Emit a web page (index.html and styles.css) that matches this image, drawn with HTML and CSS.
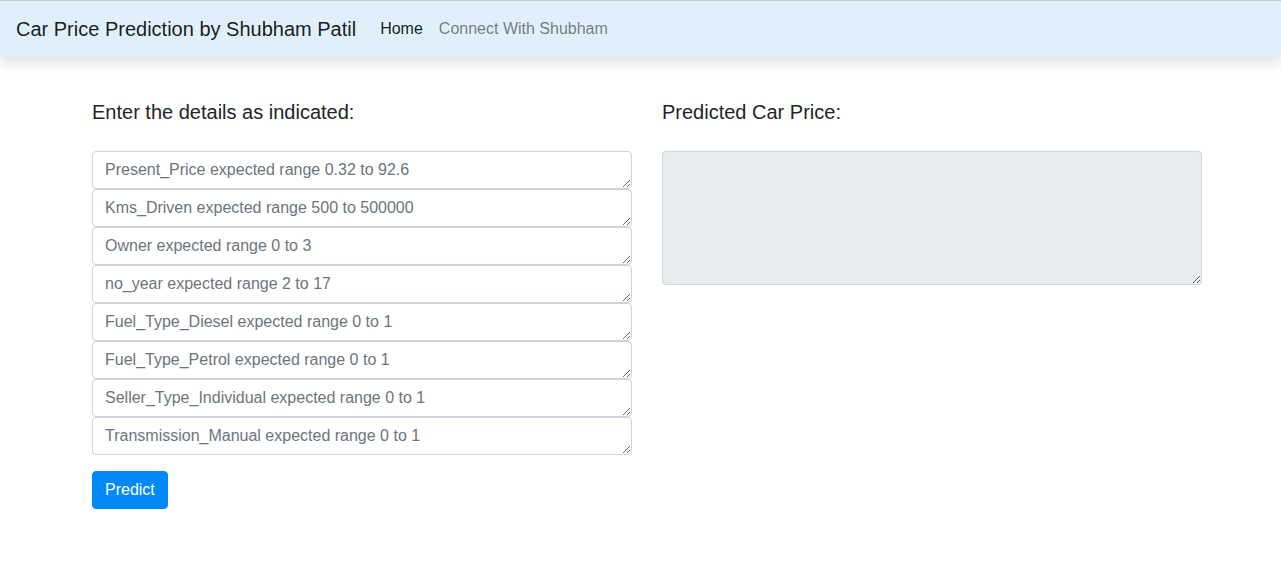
FILE: index.html
```html
<!DOCTYPE html>
<html lang="en">
<head>
<meta charset="utf-8">
<title>Car Price Prediction</title>
<link rel="stylesheet" href="styles.css">
</head>
<body>
<nav class="navbar">
  <span class="brand">Car Price Prediction by Shubham Patil</span>
  <a class="nav-link active" href="#">Home</a>
  <a class="nav-link" href="#">Connect With Shubham</a>
</nav>
<main class="content">
  <section class="col">
    <h5 class="title">Enter the details as indicated:</h5>
    <form class="form">
      <textarea class="field" rows="1" placeholder="Present_Price expected range 0.32 to 92.6"></textarea>
      <textarea class="field" rows="1" placeholder="Kms_Driven expected range 500 to 500000"></textarea>
      <textarea class="field" rows="1" placeholder="Owner expected range 0 to 3"></textarea>
      <textarea class="field" rows="1" placeholder="no_year expected range 2 to 17"></textarea>
      <textarea class="field" rows="1" placeholder="Fuel_Type_Diesel expected range 0 to 1"></textarea>
      <textarea class="field" rows="1" placeholder="Fuel_Type_Petrol expected range 0 to 1"></textarea>
      <textarea class="field" rows="1" placeholder="Seller_Type_Individual expected range 0 to 1"></textarea>
      <textarea class="field" rows="1" placeholder="Transmission_Manual expected range 0 to 1"></textarea>
      <button type="button" class="btn">Predict</button>
    </form>
  </section>
  <section class="col">
    <h5 class="title">Predicted Car Price:</h5>
    <textarea class="field result" readonly></textarea>
  </section>
</main>
</body>
</html>
```
FILE: styles.css
```css
* { box-sizing: border-box; }
body {
  margin: 0;
  font-family: "Liberation Sans", Arial, sans-serif;
  font-size: 16px;
  line-height: 1.5;
  color: #212529;
  background: #fff;
}
.navbar {
  height: 57px;
  border-top: 1px solid #c3cbcf;
  background: #dff0fa;
  display: flex;
  align-items: center;
  padding: 0 16px;
  box-shadow: 0 6px 12px rgba(0, 0, 0, 0.12);
}
.brand {
  font-size: 20px;
  color: rgba(0, 0, 0, 0.9);
  margin-right: 16px;
  line-height: 30px;
}
.nav-link {
  text-decoration: none;
  color: rgba(0, 0, 0, 0.5);
  padding: 0 8px;
  font-size: 16px;
}
.nav-link.active { color: rgba(0, 0, 0, 0.9); }
.content {
  display: flex;
  gap: 30px;
  padding: 43px 0 0 92px;
}
.col {
  width: 540px;
  display: flex;
  flex-direction: column;
}
.title {
  margin: 0 0 27px;
  font-size: 20px;
  font-weight: 500;
  line-height: 24px;
}
.form { display: flex; flex-direction: column; align-items: flex-start; }
.field {
  display: block;
  width: 540px;
  height: 38px;
  padding: 6px 12px;
  font-family: inherit;
  font-size: 16px;
  line-height: 1.5;
  color: #495057;
  background: #fff;
  border: 1px solid #ced4da;
  border-radius: 4px;
  margin: 0;
}
.field::placeholder { color: #6c757d; opacity: 1; }
.result {
  height: 134px;
  background: #e9ecef;
}
.btn {
  margin-top: 16px;
  height: 38px;
  padding: 6px 12px;
  font-family: inherit;
  font-size: 16px;
  line-height: 1.5;
  color: #fff;
  background: #0088f8;
  border: 1px solid #0088f8;
  border-radius: 4px;
}
```
